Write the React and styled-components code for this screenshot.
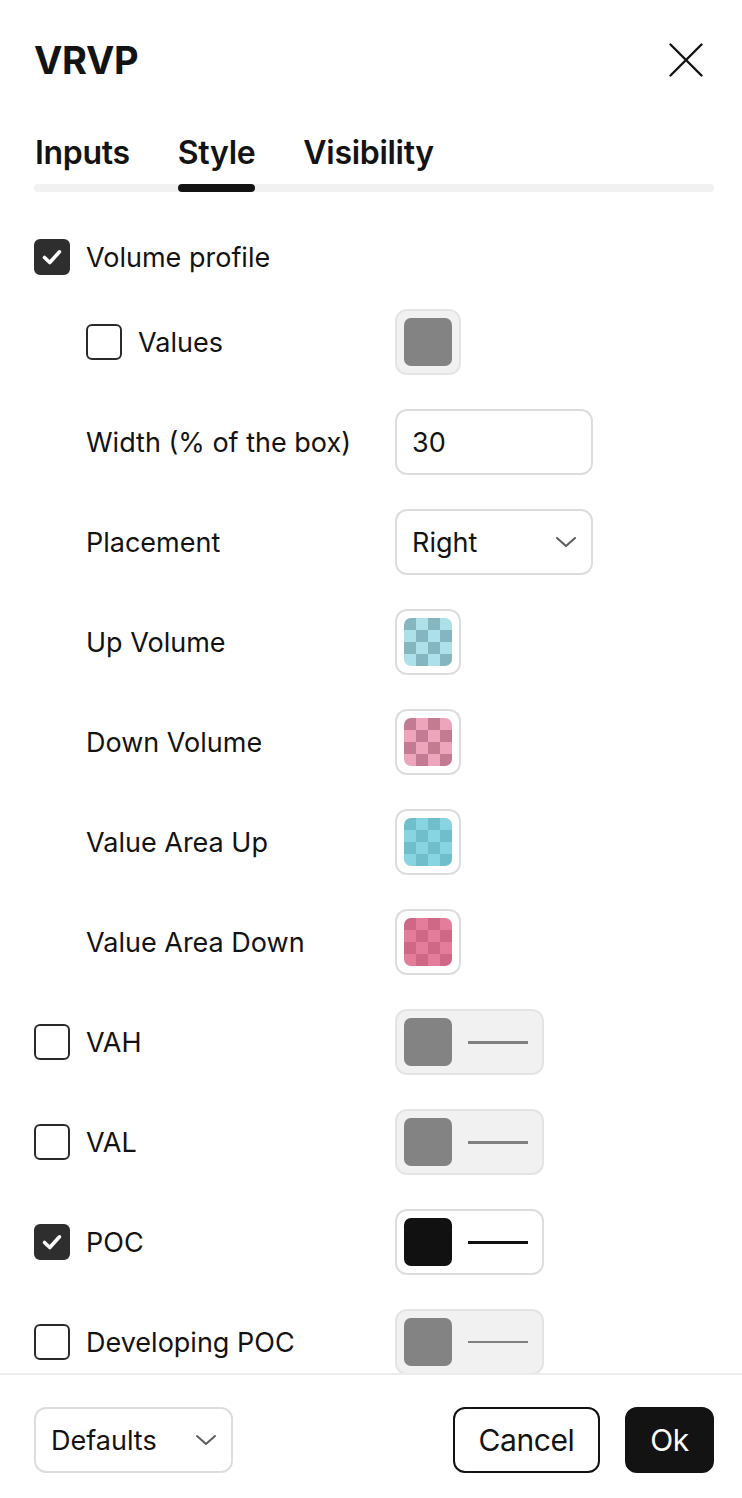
import React from 'react';
import styled, { createGlobalStyle, css } from 'styled-components';

const GlobalStyle = createGlobalStyle`
  html, body {
    margin: 0;
    padding: 0;
    background: #ffffff;
  }
  body {
    font-family: Inter, "Noto Sans", "Liberation Sans", sans-serif;
    color: #131313;
    -webkit-font-smoothing: antialiased;
  }
  * { box-sizing: border-box; }
`;

const Dialog = styled.div`
  width: 742px;
  height: 1498px;
  display: flex;
  flex-direction: column;
  background: #fff;
  overflow: hidden;
`;

const Header = styled.header`
  padding: 0 28px 0 34px;
  flex-shrink: 0;
`;

const TitleRow = styled.div`
  height: 120px;
  display: flex;
  align-items: center;
  justify-content: space-between;
`;

const Title = styled.h1`
  margin: 0;
  font-size: 38px;
  font-weight: 700;
  letter-spacing: -0.3px;
  color: #131313;
`;

const CloseButton = styled.button`
  width: 34px;
  height: 34px;
  margin-right: 11px;
  padding: 0;
  border: none;
  background: none;
  display: flex;
  align-items: center;
  justify-content: center;
  cursor: pointer;
`;

const TabBar = styled.div`
  position: relative;
  display: flex;
  gap: 48px;
  padding-left: 1px;

  &::before {
    content: '';
    position: absolute;
    left: 0;
    right: 0;
    bottom: 0;
    height: 8px;
    border-radius: 4px;
    background: #f1f1f1;
  }
`;

const Tab = styled.div`
  position: relative;
  font-size: 32px;
  font-weight: 600;
  line-height: 38px;
  padding: 14px 0 12px;
  letter-spacing: -0.3px;
  color: #131313;
  margin-bottom: 8px;

  ${props => props.$active && css`
    &::after {
      content: '';
      position: absolute;
      left: 0;
      right: 0;
      bottom: -8px;
      height: 8px;
      border-radius: 4px;
      background: #131313;
      z-index: 1;
    }
  `}
`;

const Content = styled.div`
  flex: 1;
  overflow: hidden;
  padding: 47px 28px 0 34px;
  display: flex;
  flex-direction: column;
  gap: 34px;
`;

const Row = styled.div`
  display: flex;
  align-items: center;
  min-height: ${props => (props.$compact ? '36px' : '66px')};
`;

const LabelCell = styled.label`
  width: 361px;
  flex-shrink: 0;
  display: flex;
  align-items: center;
  gap: 16px;
  padding-left: ${props => (props.$indent ? '52px' : '0')};
  font-size: 27px;
  color: #131313;
`;

const Checkbox = styled.span`
  width: 36px;
  height: 36px;
  flex-shrink: 0;
  border-radius: 6px;
  border: 2px solid ${props => (props.$checked ? '#2e2e2e' : '#2a2a2a')};
  background: ${props => (props.$checked ? '#2e2e2e' : '#fff')};
  display: flex;
  align-items: center;
  justify-content: center;
`;

const Field = styled.div`
  width: ${props => props.$width || 198}px;
  height: 66px;
  border: 2px solid #dddddd;
  border-radius: 12px;
  padding: 0 14px 0 15px;
  display: flex;
  align-items: center;
  justify-content: space-between;
  font-size: 27px;
  color: #131313;
  background: #fff;
`;

const SwatchButton = styled.div`
  height: 66px;
  min-width: 66px;
  padding: 0 ${props => (props.$line ? '14px' : '7px')} 0 7px;
  border: 2px solid ${props => (props.$disabled ? '#e4e4e4' : '#dddddd')};
  border-radius: 12px;
  background: ${props => (props.$disabled ? '#f1f1f1' : '#fff')};
  display: flex;
  align-items: center;
  gap: 16px;
`;

const Swatch = styled.span`
  width: 48px;
  height: 48px;
  border-radius: 7px;
  flex-shrink: 0;
  background: ${props => props.$color};
`;

const CheckerSwatch = styled.span`
  width: 48px;
  height: 48px;
  border-radius: 7px;
  overflow: hidden;
  flex-shrink: 0;
  display: grid;
  grid-template-columns: repeat(4, 12px);
  grid-template-rows: repeat(4, 12px);
`;

const Cell = styled.span`
  background: ${props => props.$color};
`;

const LineSample = styled.span`
  width: 60px;
  height: ${props => props.$weight}px;
  background: ${props => props.$color};
`;

const Footer = styled.footer`
  flex-shrink: 0;
  border-top: 2px solid #ececec;
  padding: 32px 28px 25px 34px;
  display: flex;
  align-items: center;
  justify-content: space-between;
`;

const Actions = styled.div`
  display: flex;
  gap: 25px;
`;

const Button = styled.button`
  height: 66px;
  width: ${props => (props.$primary ? '89px' : '147px')};
  padding: 0;
  border-radius: 12px;
  border: 2px solid #131313;
  background: ${props => (props.$primary ? '#131313' : '#fff')};
  color: ${props => (props.$primary ? '#fff' : '#131313')};
  font-family: inherit;
  font-size: 30px;
  font-weight: 400;
  letter-spacing: -0.4px;
  cursor: pointer;
`;

const Chevron = () => (
  <svg width="22" height="12" viewBox="0 0 22 12" fill="none">
    <path d="M2 2 L11 10 L20 2" stroke="#5c5c5c" strokeWidth="2" strokeLinecap="round" strokeLinejoin="round" />
  </svg>
);

const CheckIcon = () => (
  <svg width="22" height="22" viewBox="0 0 22 22" fill="none">
    <path d="M3.5 11.5 L8.8 16.5 L18.5 5.8" stroke="#fff" strokeWidth="3.6" strokeLinecap="round" strokeLinejoin="round" />
  </svg>
);

const CloseIcon = () => (
  <svg width="34" height="34" viewBox="0 0 34 34" fill="none">
    <path d="M1.5 1.5 L32.5 32.5 M32.5 1.5 L1.5 32.5" stroke="#131313" strokeWidth="2.4" strokeLinecap="round" />
  </svg>
);

const Checker = ({ dark, light }) => (
  <CheckerSwatch>
    {Array.from({ length: 16 }).map((_, i) => {
      const r = Math.floor(i / 4);
      const c = i % 4;
      return <Cell key={i} $color={(r + c) % 2 === 0 ? dark : light} />;
    })}
  </CheckerSwatch>
);

const checkerRows = [
  { label: 'Up Volume', dark: '#85b5c1', light: '#ade1e9' },
  { label: 'Down Volume', dark: '#c37b94', light: '#eda5bc' },
  { label: 'Value Area Up', dark: '#70bdcc', light: '#89d4e1' },
  { label: 'Value Area Down', dark: '#cf6787', light: '#e47c9b' },
];

const lineRows = [
  { label: 'VAH', checked: false, color: '#808080', weight: 3 },
  { label: 'VAL', checked: false, color: '#808080', weight: 3 },
  { label: 'POC', checked: true, color: '#111111', weight: 3 },
  { label: 'Developing POC', checked: false, color: '#808080', weight: 2 },
];

const App = () => {
  return (
    <>
      <GlobalStyle />
      <Dialog>
        <Header>
          <TitleRow>
            <Title>VRVP</Title>
            <CloseButton aria-label="Close">
              <CloseIcon />
            </CloseButton>
          </TitleRow>
          <TabBar>
            <Tab>Inputs</Tab>
            <Tab $active>Style</Tab>
            <Tab>Visibility</Tab>
          </TabBar>
        </Header>

        <Content>
          <Row $compact>
            <LabelCell>
              <Checkbox $checked><CheckIcon /></Checkbox>
              Volume profile
            </LabelCell>
          </Row>

          <Row>
            <LabelCell $indent>
              <Checkbox />
              Values
            </LabelCell>
            <SwatchButton $disabled>
              <Swatch $color="#838383" />
            </SwatchButton>
          </Row>

          <Row>
            <LabelCell $indent>Width (% of the box)</LabelCell>
            <Field>30</Field>
          </Row>

          <Row>
            <LabelCell $indent>Placement</LabelCell>
            <Field>
              Right
              <Chevron />
            </Field>
          </Row>

          {checkerRows.map(row => (
            <Row key={row.label}>
              <LabelCell $indent>{row.label}</LabelCell>
              <SwatchButton>
                <Checker dark={row.dark} light={row.light} />
              </SwatchButton>
            </Row>
          ))}

          {lineRows.map(row => (
            <Row key={row.label}>
              <LabelCell>
                <Checkbox $checked={row.checked}>{row.checked && <CheckIcon />}</Checkbox>
                {row.label}
              </LabelCell>
              <SwatchButton $line $disabled={!row.checked}>
                <Swatch $color={row.checked ? '#111111' : '#838383'} />
                <LineSample $color={row.color} $weight={row.weight} />
              </SwatchButton>
            </Row>
          ))}
        </Content>

        <Footer>
          <Field $width={199}>
            Defaults
            <Chevron />
          </Field>
          <Actions>
            <Button>Cancel</Button>
            <Button $primary>Ok</Button>
          </Actions>
        </Footer>
      </Dialog>
    </>
  );
};

export default App;
